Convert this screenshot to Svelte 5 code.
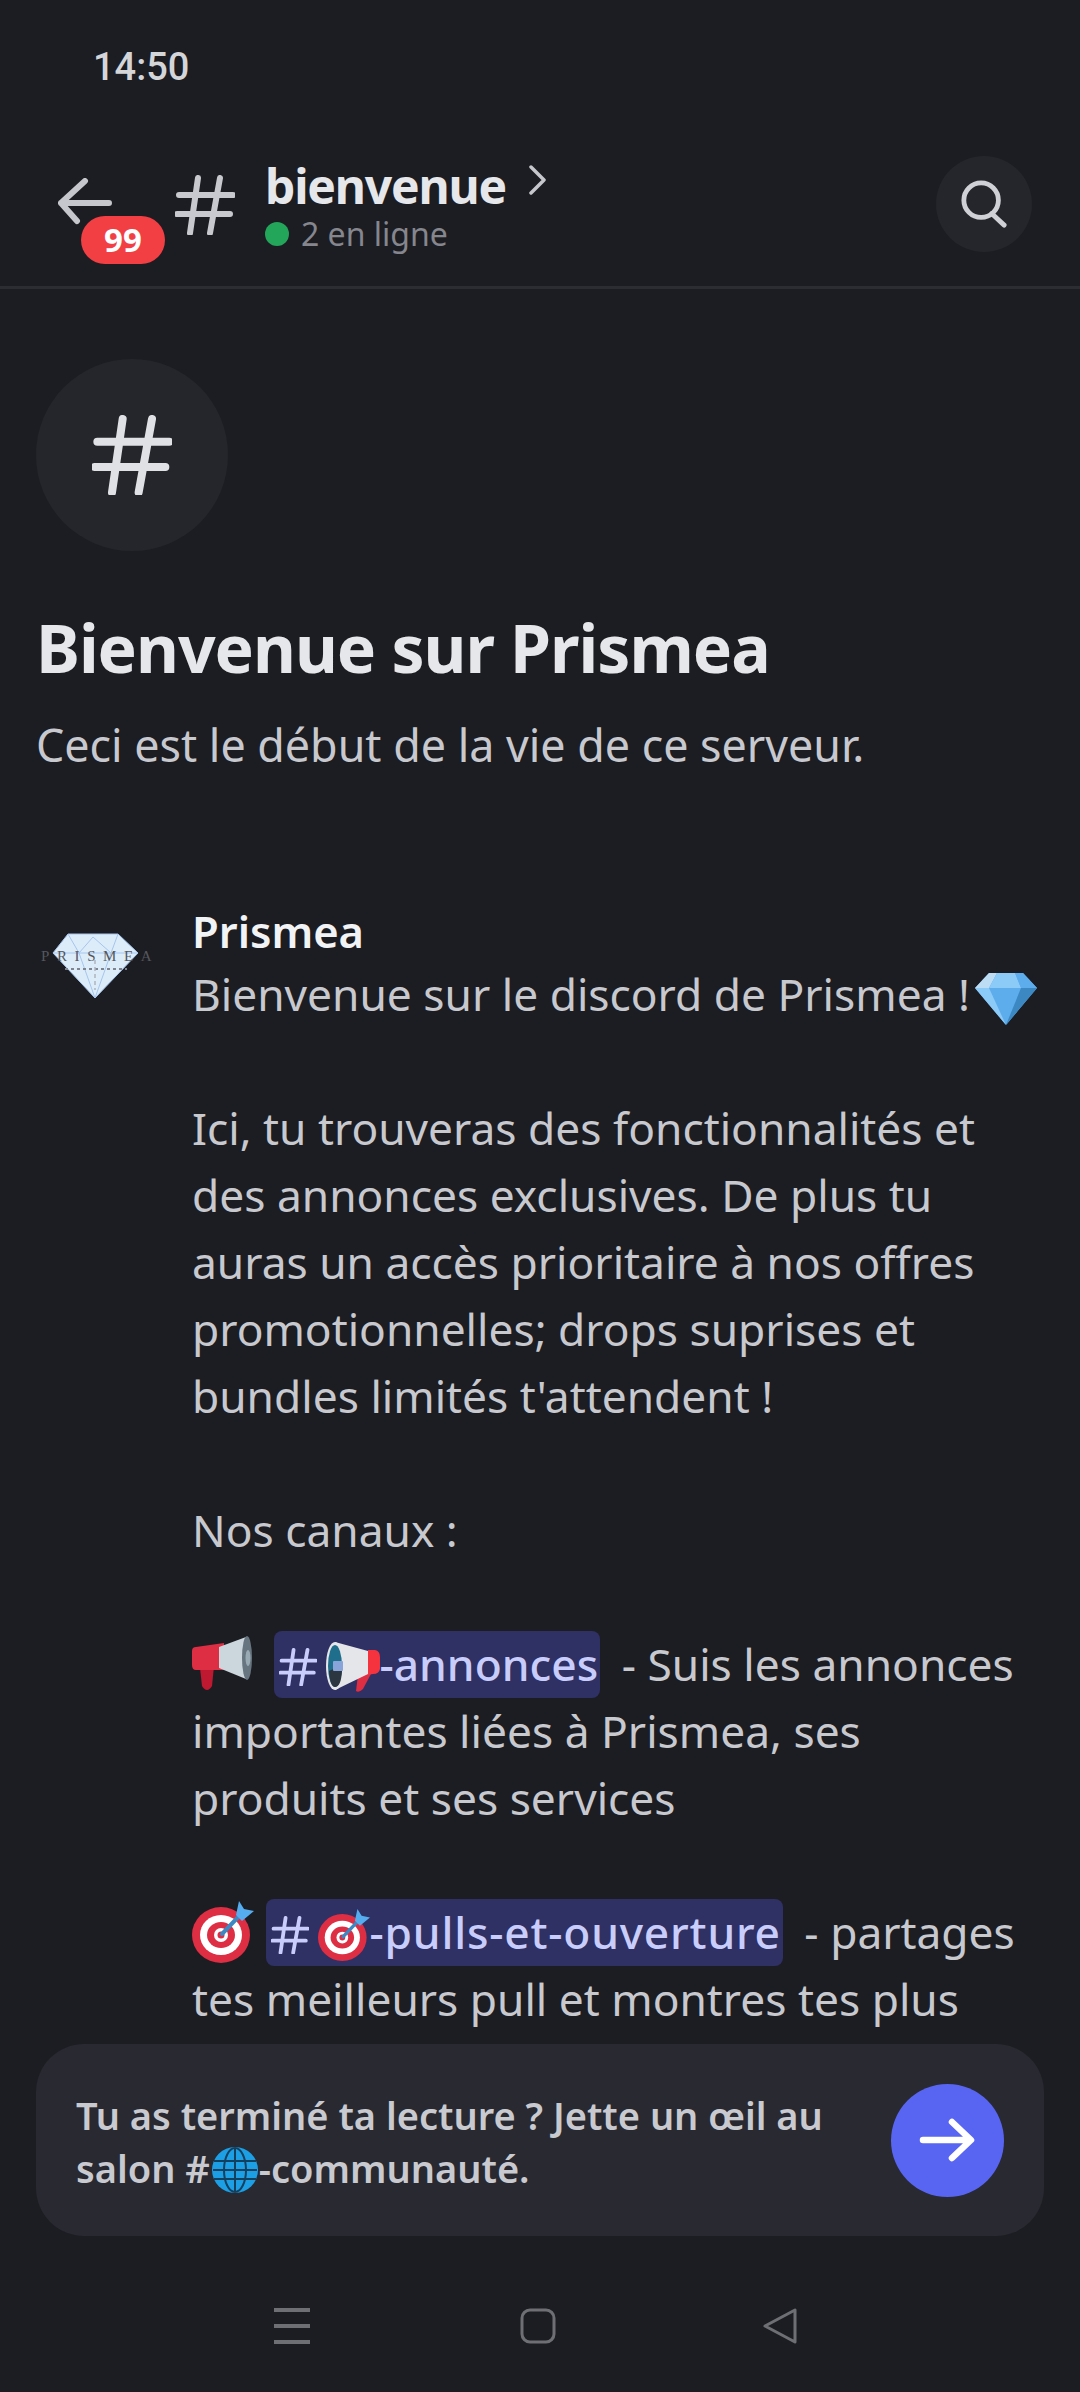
<script>
	// Discord channel screen, emojis are hand drawn since no emoji font is available
</script>

{#snippet hash(cls)}
	<svg class={cls} viewBox="0 0 60 60" fill="none" stroke="currentColor" stroke-width="6" stroke-linecap="round">
		<path d="M23 3 L15 58 M45 3 L35 58 M4 20 H58 M2 39 H55" />
	</svg>
{/snippet}

{#snippet gem()}
	<svg class="gem" viewBox="0 0 62 52">
		<path d="M14 0 H48 L62 15 L31 52 L0 15 Z" fill="#5dadec" />
		<path d="M14 0 H22 L14 15 H0 Z" fill="#bdddf4" />
		<path d="M22 0 H40 L46 15 H14 Z" fill="#8ccaf7" />
		<path d="M40 0 H48 L62 15 H46 Z" fill="#5dadec" />
		<path d="M0 15 H14 L31 52 Z" fill="#8ccaf7" />
		<path d="M46 15 H62 L31 52 Z" fill="#3b88c3" />
	</svg>
{/snippet}

{#snippet megaphoneRight()}
	<svg class="horn" viewBox="0 0 60 55">
		<path d="M8 32 L22 30 L20 50 Q15 58 10 50 Z" fill="#be1931" />
		<path d="M4 11 L32 7 V34 L4 34 Q0 34 0 29 V15 Q0 11 4 11 Z" fill="#dd2e44" />
		<path d="M27 11 L54 1 V43 L27 32 Z" fill="#ccd6dd" />
		<ellipse cx="55" cy="22" rx="5" ry="22" fill="#66757f" />
		<ellipse cx="56" cy="22" rx="2.5" ry="8" fill="#99aab5" />
	</svg>
{/snippet}

{#snippet megaphoneLeft()}
	<svg class="horn-small" viewBox="0 0 54 52">
		<path d="M32 34 L46 31 L37 48 Q33 52 30 50 Z" fill="#dd2e44" />
		<path d="M42 9 H49 Q54 10 54 16 V28 Q53 33 47 33 L40 34 Z" fill="#f4333f" />
		<path d="M9 1 L42 10 V33 L9 49 Z" fill="#e4e6ea" />
		<ellipse cx="9" cy="25" rx="9" ry="24" fill="#e4e6ea" />
		<ellipse cx="9" cy="25" rx="7" ry="21" fill="#1f6f8c" />
		<path d="M3 30 Q9 26 16 30 Q15 46 9 46 Q4 46 3 30 Z" fill="#2c3640" />
		<rect x="7" y="20" width="10" height="10" rx="1" fill="#88a4d8" />
	</svg>
{/snippet}

{#snippet target(cls)}
	<svg class={cls} viewBox="0 0 62 62">
		<ellipse cx="29" cy="34" rx="29" ry="28" fill="#dd2e44" />
		<ellipse cx="29" cy="34" rx="21" ry="20" fill="#fff" />
		<ellipse cx="29" cy="34" rx="14" ry="13" fill="#dd2e44" />
		<ellipse cx="29" cy="34" rx="7" ry="7" fill="#fff" />
		<ellipse cx="29" cy="34" rx="3.5" ry="3.5" fill="#dd2e44" />
		<path d="M30 33 L50 12" stroke="#3b88c3" stroke-width="4" stroke-linecap="round" />
		<path d="M44 14 L47 0 L52 8 L62 10 L50 20 Z" fill="#55acee" />
	</svg>
{/snippet}

<div class="screen">
	<div class="status">14:50</div>

	<header class="topbar">
		<div class="back">
			<svg viewBox="0 0 54 54" fill="none" stroke="#c5c7cd" stroke-width="6" stroke-linecap="round" stroke-linejoin="round">
				<path d="M51 25 H3 M27 3 L3 25 L19 43" />
			</svg>
			<span class="badge">99</span>
		</div>
		{@render hash("topbar-hash")}
		<div class="titles">
			<div class="title-row">
				<span class="title">bienvenue</span>
				<svg class="chevron" viewBox="0 0 18 30" fill="none" stroke="#c5c7cd" stroke-width="3.5" stroke-linecap="round" stroke-linejoin="round">
					<path d="M3 2 L16 15 L3 28" />
				</svg>
			</div>
			<div class="presence"><span class="dot"></span>2 en ligne</div>
		</div>
		<button class="search" aria-label="Rechercher">
			<svg viewBox="0 0 50 50" fill="none" stroke="#d0d1d6" stroke-width="5" stroke-linecap="round">
				<circle cx="22" cy="21" r="18" />
				<path d="M33 35 L46 47" />
			</svg>
		</button>
	</header>

	<main class="feed">
		<div class="channel-icon">{@render hash("big-hash")}</div>
		<h1>Bienvenue sur Prismea</h1>
		<p class="intro">Ceci est le début de la vie de ce serveur.</p>

		<article class="message">
			<div class="avatar">
				<svg viewBox="0 0 90 68">
					<path d="M17 2 H67 L87 21 L44 66 L2 21 Z" fill="#dcedf9" />
					<path d="M17 2 L2 21 H87 L67 2 Z M2 21 L44 66 L87 21 M28 21 L44 66 L60 21 M17 2 L28 21 L42 5 L60 21 L67 2" fill="none" stroke="#a6c5ee" stroke-width="1" />
					<path d="M14 37 H76" stroke="#7f8590" stroke-width="2" stroke-dasharray="3 3" />
					<path d="M44 28 V58" stroke="#aeb4bd" stroke-width="1.5" stroke-dasharray="4 3" />
				</svg>
				<span class="logo-text">PRISMEA</span>
			</div>
			<div class="body">
				<div class="author">Prismea</div>
				<p>Bienvenue sur le discord de Prismea ! {@render gem()}</p>
				<p>Ici, tu trouveras des fonctionnalités et<br />des annonces exclusives. De plus tu<br />auras un accès prioritaire à nos offres<br />promotionnelles; drops suprises et<br />bundles limités t'attendent !</p>
				<p>Nos canaux :</p>
				<p>{@render megaphoneRight()} <span class="mention first">{@render hash("mention-hash")}{@render megaphoneLeft()}-annonces</span> - Suis les annonces<br />importantes liées à Prismea, ses<br />produits et ses services</p>
				<p>{@render target("target")} <span class="mention second">{@render hash("mention-hash")}{@render target("target-small")}-pulls-et-ouverture</span> - partages<br />tes meilleurs pull et montres tes plus</p>
			</div>
		</article>
	</main>

	<section class="prompt">
		<p>Tu as terminé ta lecture ? Jette un œil au<br />salon #<svg class="globe" viewBox="0 0 46 46" fill="none" stroke="#14405e" stroke-width="2"><circle cx="23" cy="23" r="23" fill="#1d9fe6" stroke="none" /><ellipse cx="23" cy="23" rx="11" ry="22" /><path d="M23 1 V45 M2 14 H44 M1 23 H45 M2 32 H44" /></svg>-communauté.</p>
		<button class="go" aria-label="Continuer">
			<svg viewBox="0 0 56 44" fill="none" stroke="#fff" stroke-width="6.5" stroke-linecap="round" stroke-linejoin="round">
				<path d="M4 22 H50 M33 4 L52 22 L33 40" />
			</svg>
		</button>
	</section>

	<nav class="navbar">
		<svg class="nav-menu" viewBox="0 0 36 36" fill="#6e6f75"><rect width="36" height="4" /><rect y="16" width="36" height="4" /><rect y="32" width="36" height="4" /></svg>
		<svg class="nav-home" viewBox="0 0 36 36" fill="none" stroke="#6e6f75" stroke-width="3"><rect x="2" y="2" width="32" height="32" rx="8" /></svg>
		<svg class="nav-back" viewBox="0 0 36 36" fill="none" stroke="#6e6f75" stroke-width="3" stroke-linejoin="round"><path d="M33 2 V34 L3 18 Z" /></svg>
	</nav>
</div>

<style>
	:global(body) {
		margin: 0;
		background: #1c1d22;
	}
	.screen {
		width: 1080px;
		height: 2392px;
		display: flex;
		flex-direction: column;
		overflow: hidden;
		background: #1c1d22;
		font-family: "Noto Sans", sans-serif;
		color: #c8c9cf;
	}
	.status {
		height: 132px;
		box-sizing: border-box;
		padding: 45px 0 0 93px;
		font: 500 38px/44px Roboto, sans-serif;
		color: #d4d5d9;
	}
	.topbar {
		height: 157px;
		box-sizing: border-box;
		flex: none;
		display: flex;
		align-items: flex-start;
		padding: 24px 48px 0 58px;
		border-bottom: 3px solid #2c2d33;
	}
	.back {
		position: relative;
		width: 54px;
		height: 54px;
		margin-top: 22px;
	}
	.back svg {
		display: block;
		width: 54px;
		height: 54px;
	}
	.badge {
		position: absolute;
		left: 23px;
		top: 38px;
		width: 84px;
		height: 48px;
		border-radius: 24px;
		background: #f23f43;
		color: #fff;
		font-weight: 700;
		font-size: 33px;
		line-height: 48px;
		text-align: center;
	}
	.topbar-hash {
		width: 60px;
		height: 60px;
		margin: 19px 30px 0 63px;
		color: #c8c9cf;
	}
	.titles {
		flex: 1;
	}
	.title-row {
		display: flex;
		align-items: center;
		height: 60px;
		margin-bottom: -3px;
	}
	.title {
		font-size: 48px;
		letter-spacing: -1.2px;
		font-weight: 700;
		line-height: 54px;
		color: #e6e7ea;
	}
	.chevron {
		width: 18px;
		height: 30px;
		margin: -12px 0 0 22px;
	}
	.presence {
		display: flex;
		align-items: center;
		font-size: 32px;
		line-height: 42px;
		color: #85868e;
	}
	.dot {
		width: 24px;
		height: 24px;
		border-radius: 50%;
		background: #23a55a;
		margin-right: 12px;
	}
	.search {
		width: 96px;
		height: 96px;
		border: 0;
		padding: 24px;
		border-radius: 50%;
		background: #25262c;
	}
	.search svg {
		display: block;
		width: 48px;
		height: 48px;
	}
	.feed {
		flex: 1;
		min-height: 0;
		overflow: hidden;
		padding: 70px 36px 0;
	}
	.channel-icon {
		width: 192px;
		height: 192px;
		border-radius: 50%;
		background: #25262c;
		display: flex;
		align-items: center;
		justify-content: center;
	}
	.big-hash {
		width: 80px;
		height: 80px;
		color: #e0e1e5;
	}
	h1 {
		margin: 56px 0 0;
		font-size: 66px;
		letter-spacing: -1px;
		line-height: 80px;
		font-weight: 700;
		color: #e6e7ea;
	}
	.intro {
		margin: 28px 0 0;
		font-size: 44.8px;
		line-height: 60px;
	}
	.message {
		display: flex;
		margin-top: 126px;
	}
	.avatar {
		position: relative;
		flex: none;
		width: 156px;
		height: 100px;
	}
	.avatar svg {
		position: absolute;
		left: 15px;
		top: 31px;
		width: 90px;
		height: 68px;
	}
	.logo-text {
		position: absolute;
		left: 5px;
		top: 46px;
		font: 15px/18px "Liberation Serif", serif;
		letter-spacing: 7.6px;
		color: #55565c;
	}
	.author {
		font-size: 43.5px;
		font-weight: 600;
		line-height: 60px;
		color: #f2f3f5;
	}
	.body p {
		margin: 0 0 67px;
		font-size: 44.3px;
		line-height: 67px;
		white-space: nowrap;
	}
	.gem {
		width: 62px;
		height: 52px;
		vertical-align: -14px;
		margin-left: -6px;
	}
	.horn {
		width: 60px;
		height: 55px;
		vertical-align: -10px;
		margin-right: 10px;
	}
	.mention {
		display: inline-block;
		height: 67px;
		line-height: 67px;
		padding: 0 2px 0 5px;
		margin-right: 10px;
		border-radius: 8px;
		background: #2f3063;
		color: #c9cdfb;
		font-weight: 500;
	}
	.second {
		letter-spacing: 0.8px;
	}
	.mention-hash {
		width: 38px;
		height: 38px;
		vertical-align: -5px;
		margin-right: 9px;
	}
	.horn-small {
		width: 54px;
		height: 52px;
		vertical-align: -12px;
	}
	.target {
		width: 62px;
		height: 62px;
		vertical-align: -14px;
	}
	.target-small {
		width: 52px;
		height: 52px;
		vertical-align: -12px;
	}
	.prompt {
		flex: none;
		display: flex;
		align-items: center;
		justify-content: space-between;
		box-sizing: border-box;
		height: 192px;
		margin: 14px 36px 0;
		padding: 0 40px;
		border-radius: 48px;
		background: #282931;
	}
	.prompt p {
		margin: 0;
		padding-top: 4px;
		font-size: 38px;
		line-height: 53px;
		font-weight: 600;
		color: #c9cad0;
		white-space: nowrap;
	}
	.globe {
		width: 46px;
		height: 46px;
		vertical-align: -10px;
		margin: 0 1px 0 2px;
	}
	.go {
		flex: none;
		width: 113px;
		height: 113px;
		padding: 30px 28px;
		border: 0;
		border-radius: 50%;
		background: #5865f2;
	}
	.go svg {
		display: block;
		width: 56px;
		height: 44px;
	}
	.navbar {
		flex: none;
		height: 156px;
		box-sizing: border-box;
		display: flex;
		align-items: flex-start;
		padding-top: 72px;
	}
	.navbar svg {
		width: 36px;
		height: 36px;
	}
	.nav-menu {
		margin-left: 274px;
	}
	.nav-home {
		margin-left: 210px;
	}
	.nav-back {
		margin-left: 206px;
	}
</style>
